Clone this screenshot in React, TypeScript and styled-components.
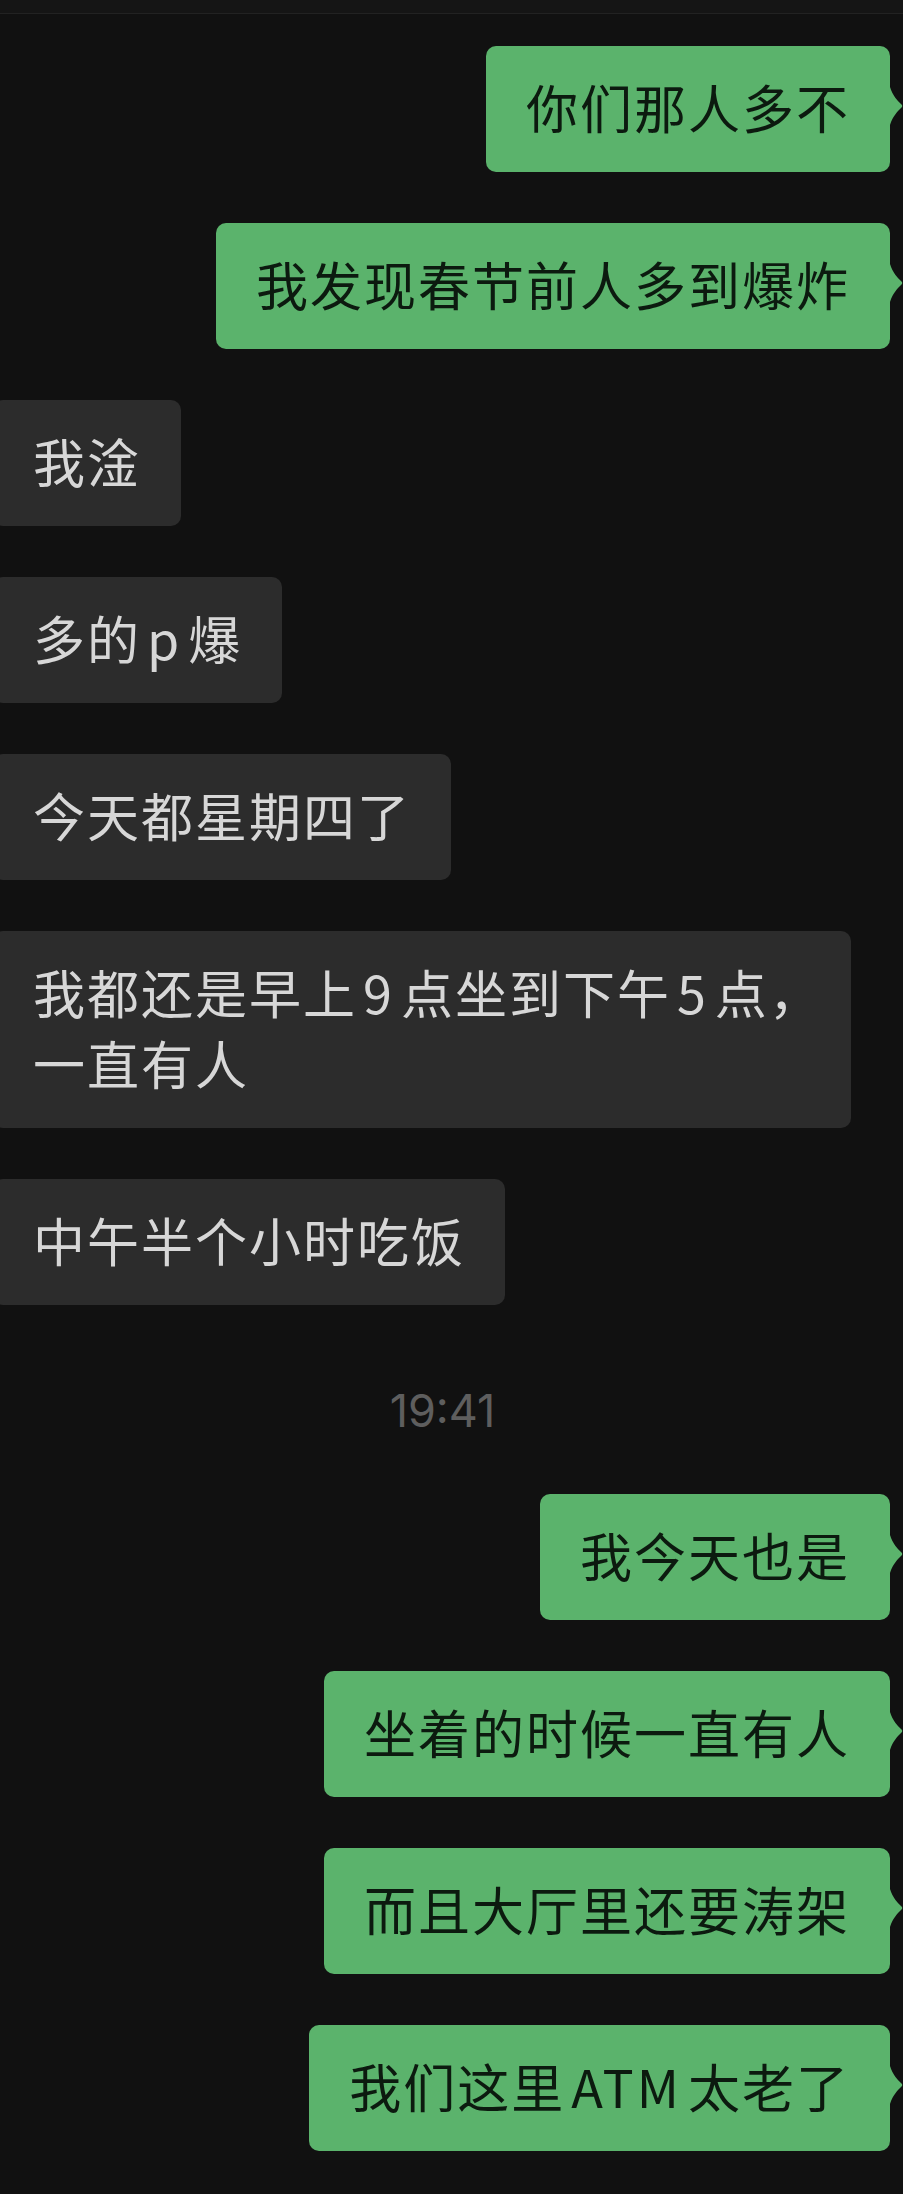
import React from 'react';
import styled, { createGlobalStyle } from 'styled-components';

const GlobalStyle = createGlobalStyle`
  html, body {
    margin: 0;
    padding: 0;
    background: #111111;
  }
`;

const Screen = styled.div`
  width: 903px;
  min-height: 2194px;
  background: #111111;
  overflow: hidden;
  font-family: "Noto Sans CJK SC", "Noto Sans", sans-serif;
`;

const TopBar = styled.div`
  height: 13px;
  background: #151515;
  border-bottom: 1px solid #222222;
`;

const Thread = styled.div`
  display: flex;
  flex-direction: column;
  gap: 51px;
  padding-top: 32px;
`;

const Row = styled.div<{ $mine?: boolean }>`
  display: flex;
  justify-content: ${(p) => (p.$mine ? 'flex-end' : 'flex-start')};
  padding-right: ${(p) => (p.$mine ? '13px' : '0')};
  margin-left: ${(p) => (p.$mine ? '0' : '-7px')};
`;

const Bubble = styled.div<{ $mine?: boolean }>`
  position: relative;
  box-sizing: border-box;
  max-width: 858px;
  padding: 25px 40px 30px 40px;
  border-radius: 10px;
  font-size: 52px;
  line-height: 71px;
  letter-spacing: 2px;
  background: ${(p) => (p.$mine ? '#5bb36c' : '#2c2c2c')};
  color: ${(p) => (p.$mine ? '#0c1a0f' : '#d7d7d7')};

  ${(p) =>
    p.$mine &&
    `
    &::after {
      content: '';
      position: absolute;
      right: -13px;
      top: 41px;
      width: 13px;
      height: 38px;
      background: #5bb36c;
      clip-path: path('M0 0 C3 9 7 13 11 17 Q13.5 19 11 21 C7 25 3 29 0 38 Z');
    }
  `}
`;

// latin runs get a bit of air around them, like the phone's text engine does
const Latin = styled.span`
  margin: 0 6px;
  letter-spacing: 3px;
`;

// half-width cjk punctuation
const Punct = styled.span`
  font-feature-settings: "halt";
`;

const Stamp = styled.div`
  margin: 30px 0 7px;
  padding-right: 18px;
  text-align: center;
  font-family: Inter, "Liberation Sans", sans-serif;
  font-size: 45px;
  line-height: 50px;
  color: #5e5e5e;
`;

type Msg = { mine?: boolean; text?: string; time?: string };

const messages: Msg[] = [
  { mine: true, text: '你们那人多不' },
  { mine: true, text: '我发现春节前人多到爆炸' },
  { text: '我淦' },
  { text: '多的p爆' },
  { text: '今天都星期四了' },
  { text: '我都还是早上9点坐到下午5点，一直有人' },
  { text: '中午半个小时吃饭' },
  { time: '19:41' },
  { mine: true, text: '我今天也是' },
  { mine: true, text: '坐着的时候一直有人' },
  { mine: true, text: '而且大厅里还要涛架' },
  { mine: true, text: '我们这里ATM太老了' },
];

const renderText = (text: string) =>
  text.split(/([A-Za-z0-9]+|，)/).map((part, i) => {
    if (part === '，') return <Punct key={i}>{part}</Punct>;
    if (/^[A-Za-z0-9]+$/.test(part)) return <Latin key={i}>{part}</Latin>;
    return part;
  });

const App = () => {
  return (
    <Screen>
      <GlobalStyle />
      <TopBar />
      <Thread>
        {messages.map((m, i) =>
          m.time ? (
            <Stamp key={i}>{m.time}</Stamp>
          ) : (
            <Row key={i} $mine={m.mine}>
              <Bubble $mine={m.mine}>{renderText(m.text || '')}</Bubble>
            </Row>
          )
        )}
      </Thread>
    </Screen>
  );
};

export default App;
